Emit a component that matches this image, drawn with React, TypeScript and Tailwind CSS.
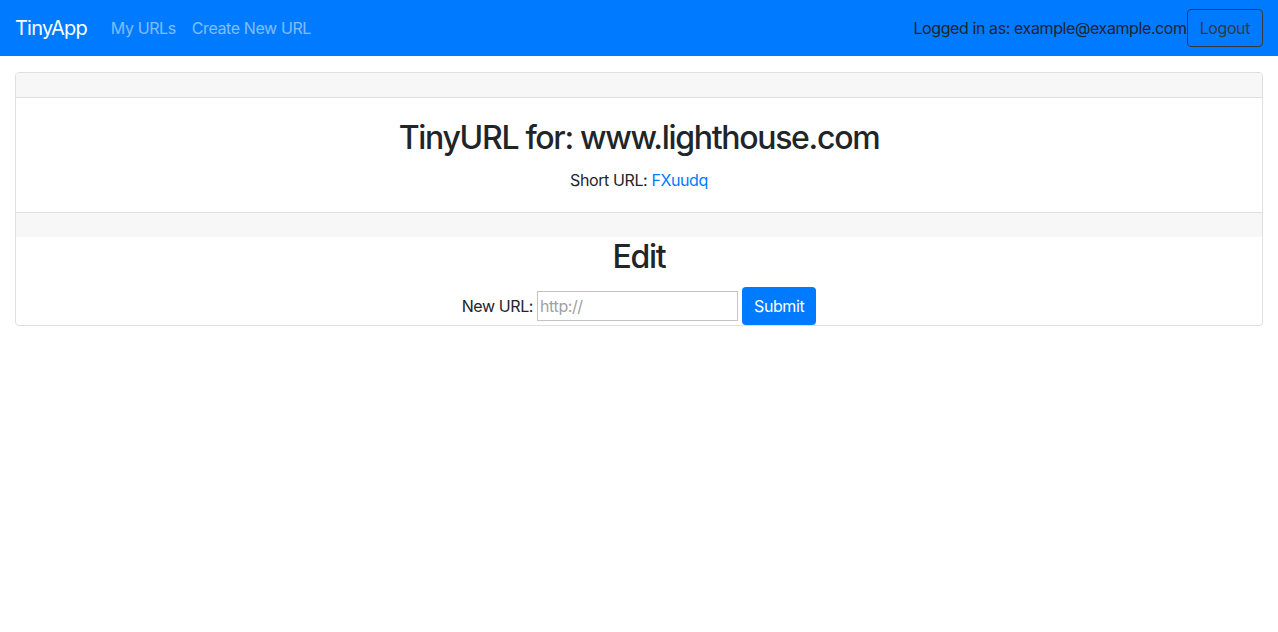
import React from "react";

export default function App() {
  return (
    <div className="min-h-[632px] bg-white text-[#212529] text-[16px] leading-[24px] tracking-[-0.025em]" style={{ fontFamily: "Inter, 'Liberation Sans', sans-serif" }}>
      <nav className="h-[56px] bg-[#007bff] flex items-center justify-between px-[15px]">
        <div className="flex items-center">
          <span className="text-[20px] leading-[30px] text-white mr-[16px] tracking-[-0.04em]">TinyApp</span>
          <a className="px-[8px] text-white/50">My URLs</a>
          <a className="px-[8px] text-white/50">Create New URL</a>
        </div>
        <div className="flex items-center">
          <span className="text-[#212529]">Logged in as: example@example.com</span>
          <button className="h-[38px] px-[12px] border border-[#343a40] rounded-[4px] text-[#343a40]">Logout</button>
        </div>
      </nav>
      <div className="px-[15px] pt-[16px]">
        <div className="border border-[#dfdfdf] rounded-[4px] overflow-hidden">
          <div className="h-[25px] bg-[#f7f7f7] border-b border-[#dfdfdf]" />
          <div className="p-[20px] text-center">
            <h2 className="text-[32px] leading-[38px] font-medium mt-[1px] mb-[11px] tracking-[-0.041em]">TinyURL for: www.lighthouse.com</h2>
            <p>
              Short URL: <a className="text-[#007bff]">FXuudq</a>
            </p>
          </div>
          <div className="h-[25px] bg-[#f7f7f7] border-t border-[#dfdfdf]" />
          <div className="text-center">
            <h2 className="text-[32px] leading-[38px] font-medium mt-[1px] mb-[11px] tracking-[-0.041em]">Edit</h2>
            <div className="flex items-center justify-center">
              <label className="mr-[4px]">New URL:</label>
              <input
                placeholder="http://"
                className="w-[201px] h-[30px] border border-[#c4c4c4] px-[2px] placeholder:text-[#a0a0a0] outline-none"
              />
              <button className="ml-[4px] h-[38px] px-[12px] bg-[#007bff] text-white rounded-[4px]">Submit</button>
            </div>
          </div>
        </div>
      </div>
    </div>
  );
}
